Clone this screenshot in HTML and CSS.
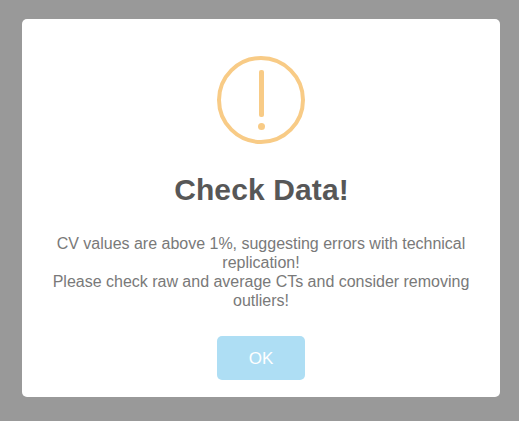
FILE: index.html
```html
<!DOCTYPE html>
<html lang="en">
<head>
<meta charset="utf-8">
<title>Check Data</title>
<link rel="stylesheet" href="styles.css">
</head>
<body>
<main class="modal" role="alertdialog">
  <div class="icon"><span class="icon-body"></span><span class="icon-dot"></span></div>
  <h2 class="title">Check Data!</h2>
  <p class="text">CV values are above 1%, suggesting errors with technical replication!<br>Please check raw and average CTs and consider removing outliers!</p>
  <button class="confirm" type="button">OK</button>
</main>
</body>
</html>
```

FILE: styles.css
```css
* { box-sizing: border-box; }
body {
  margin: 0;
  height: 421px;
  padding: 19px 0 0 22px;
  background: #999;
  font-family: "Liberation Sans", Arial, sans-serif;
  overflow: hidden;
}
.modal {
  width: 478px;
  height: 378px;
  padding: 37px 20px 17px;
  border-radius: 5px;
  background: #fff;
  display: flex;
  flex-direction: column;
  align-items: center;
}
.icon {
  flex: none;
  width: 88px;
  height: 88px;
  border: 4px solid #f8cb86;
  border-radius: 50%;
  padding-top: 10px;
  display: flex;
  flex-direction: column;
  align-items: center;
  gap: 6px;
}
.icon-body {
  width: 5px;
  height: 47px;
  border-radius: 2px;
  background: #f8cb86;
}
.icon-dot {
  width: 7px;
  height: 7px;
  border-radius: 50%;
  background: #f8cb86;
}
.title {
  margin: 29px 0 0;
  padding-left: 1px;
  font-size: 30px;
  line-height: 34px;
  font-weight: 700;
  letter-spacing: 0.12px;
  color: #575757;
}
.text {
  margin: 27px 0 0;
  width: 438px;
  font-size: 16px;
  line-height: 19px;
  letter-spacing: -0.01px;
  text-align: center;
  color: #797979;
}
.confirm {
  margin: 26px 0 0;
  width: 88px;
  height: 44px;
  padding: 2px 0 0;
  border: 0;
  border-radius: 5px;
  background: #aedef4;
  color: #fff;
  font: 17px "Liberation Sans", Arial, sans-serif;
}
```
